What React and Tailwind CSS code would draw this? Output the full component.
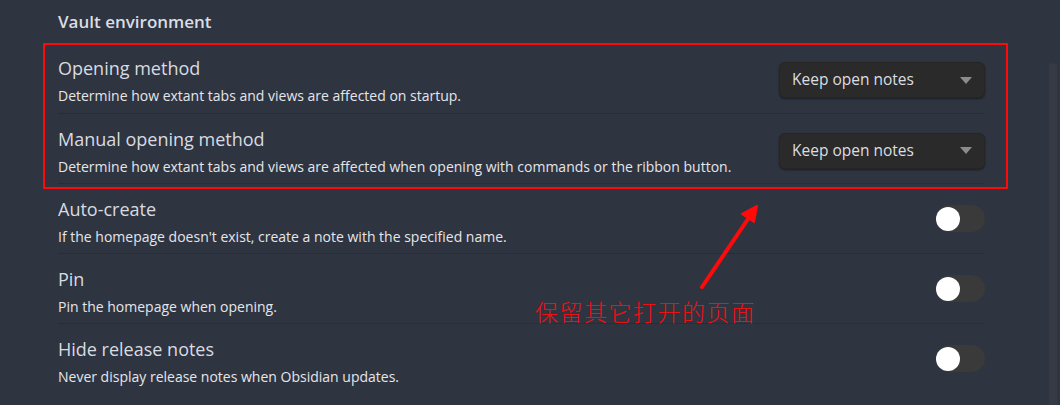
import { useState } from 'react'

const ROWS = [
  { name: 'Opening method', desc: 'Determine how extant tabs and views are affected on startup.', kind: 'select' },
  {
    name: 'Manual opening method',
    desc: 'Determine how extant tabs and views are affected when opening with commands or the ribbon button.',
    kind: 'select',
  },
  { name: 'Auto-create', desc: "If the homepage doesn't exist, create a note with the specified name.", kind: 'toggle' },
  { name: 'Pin', desc: 'Pin the homepage when opening.', kind: 'toggle' },
  { name: 'Hide release notes', desc: 'Never display release notes when Obsidian updates.', kind: 'toggle' },
]

function Select() {
  return (
    <div className="flex items-center justify-between w-[206px] h-[36px] mt-[4px] pl-[12px] pr-[12px] rounded-[6px] bg-[#2a2a2a] shadow-[0_1px_2px_rgba(0,0,0,0.45)] border border-[#262626]">
      <span className="text-[15.5px] text-[#dcdde0]">Keep open notes</span>
      <svg width="12" height="7" viewBox="0 0 12 7">
        <path d="M0 0 L12 0 L6 7 Z" fill="#8c8c8c" />
      </svg>
    </div>
  )
}

function Toggle() {
  const [on, setOn] = useState(false)
  return (
    <button
      onClick={() => setOn(!on)}
      className={`flex items-center w-[49px] h-[27px] rounded-full ${on ? 'bg-[#7c5cd6] justify-end' : 'bg-[#3a3a3a] justify-start'}`}
    >
      <span className="block w-[24px] h-[24px] rounded-full bg-white" />
    </button>
  )
}

function Row({ row, first }) {
  return (
    <div className={`flex items-center justify-between h-[70px] ${first ? '' : 'border-t border-[#292d35]'}`}>
      <div className="flex flex-col pt-[6px]">
        <div className="text-[18px] leading-[22px] text-[#d8dbe0]">{row.name}</div>
        <div className="text-[14px] leading-[18px] mt-[8px] text-[#e4e6ea]">{row.desc}</div>
      </div>
      {row.kind === 'select' ? <Select /> : <Toggle />}
    </div>
  )
}

export default function App() {
  return (
    <div className="relative flex w-[1060px] h-[405px] overflow-hidden bg-[#2f3441] font-['Segoe_UI','Open_Sans','Noto_Sans',sans-serif]">
      <div className="flex-1 pl-[58px] pr-[64px]">
        <h2 className="h-[43px] pt-[10px] text-[17px] leading-[24px] font-semibold text-[#dadde3]">Vault environment</h2>
        {ROWS.map((row, i) => (
          <Row key={row.name} row={row} first={i === 0} />
        ))}
      </div>
      <div className="w-[8px] mr-[3px] mt-[63px] rounded-t-[4px] bg-[#363a45]" />

      {/* annotation overlay */}
      <div className="absolute left-[43px] top-[43px] w-[965px] h-[146px] border-2 border-[#ff0a0a] pointer-events-none" />
      <svg className="absolute left-0 top-0 pointer-events-none" width="1060" height="405">
        <line x1="702" y1="287" x2="750" y2="216" stroke="#ff0a0a" strokeWidth="4" strokeLinecap="round" />
        <path d="M757 206 L742 214 L754 222 Z" fill="#ff0a0a" stroke="#ff0a0a" strokeWidth="2" strokeLinejoin="round" />
      </svg>
      <div className="absolute left-[535px] top-[296px] text-[23px] leading-[30px] tracking-[1.5px] font-light text-[#ee1111] font-['Noto_Sans_CJK_SC',sans-serif]">
        保留其它打开的页面
      </div>
    </div>
  )
}
